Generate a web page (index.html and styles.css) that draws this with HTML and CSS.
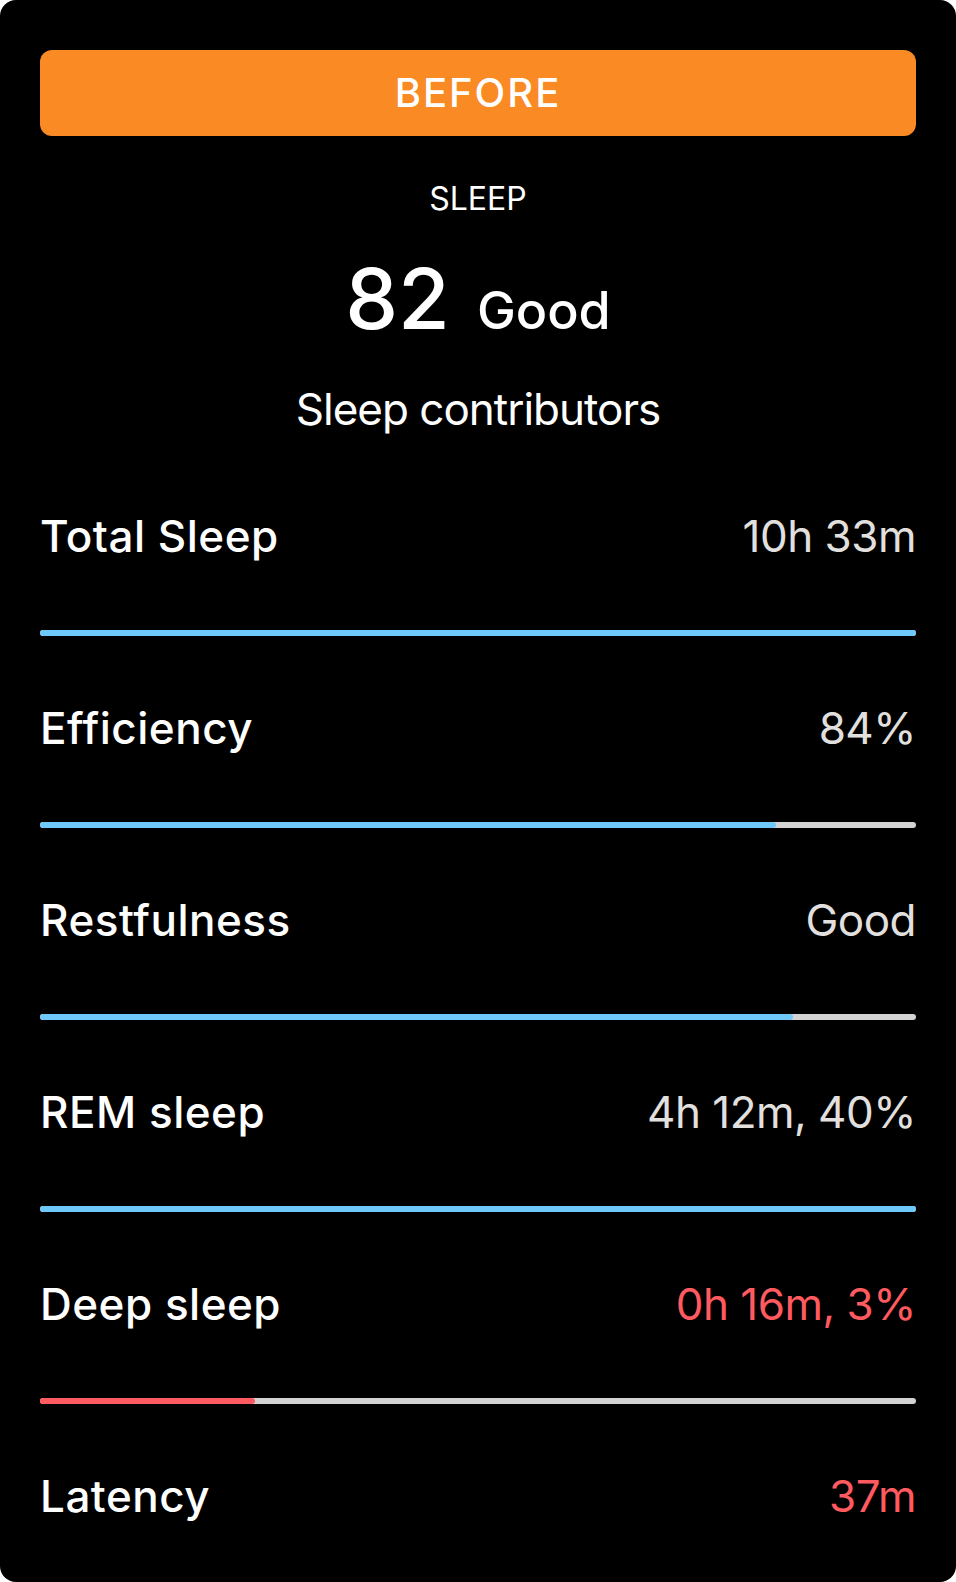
FILE: index.html
```html
<!DOCTYPE html>
<html lang="en">
<head>
  <meta charset="UTF-8">
  <meta name="viewport" content="width=device-width, initial-scale=1.0">
  <title>Sleep - Before</title>
  <link rel="stylesheet" href="styles.css">
</head>
<body>
  <div class="card">
    <div class="badge">BEFORE</div>

    <div class="section-title">SLEEP</div>

    <div class="score">
      <span class="score-num">82</span>
      <span class="score-label">Good</span>
    </div>

    <div class="subtitle">Sleep contributors</div>

    <div class="contributors">
      <div class="row">
        <div class="row-head">
          <span class="name">Total Sleep</span>
          <span class="value">10h 33m</span>
        </div>
        <div class="track"><div class="fill" style="width: 100%"></div></div>
      </div>

      <div class="row">
        <div class="row-head">
          <span class="name">Efficiency</span>
          <span class="value">84%</span>
        </div>
        <div class="track"><div class="fill" style="width: 84%"></div></div>
      </div>

      <div class="row">
        <div class="row-head">
          <span class="name">Restfulness</span>
          <span class="value">Good</span>
        </div>
        <div class="track"><div class="fill" style="width: 86%"></div></div>
      </div>

      <div class="row">
        <div class="row-head">
          <span class="name">REM sleep</span>
          <span class="value">4h 12m, 40%</span>
        </div>
        <div class="track"><div class="fill" style="width: 100%"></div></div>
      </div>

      <div class="row">
        <div class="row-head">
          <span class="name">Deep sleep</span>
          <span class="value warn">0h 16m, 3%</span>
        </div>
        <div class="track"><div class="fill warn" style="width: 24.5%"></div></div>
      </div>

      <div class="row">
        <div class="row-head">
          <span class="name">Latency</span>
          <span class="value warn">37m</span>
        </div>
      </div>
    </div>
  </div>
</body>
</html>
```

FILE: styles.css
```css
body {
  margin: 0;
  background: #fff;
  font-family: Inter, "Open Sans", sans-serif;
  color: #fff;
}
.card {
  height: 1582px;
  box-sizing: border-box;
  padding: 50px 40px 0;
  background: #000;
  border-radius: 16px;
}
.badge {
  height: 86px;
  line-height: 86px;
  background: #f98a24;
  border-radius: 12px;
  text-align: center;
  font-size: 40px;
  font-weight: 500;
  letter-spacing: 2px;
}
.section-title {
  margin-top: 43px;
  line-height: 40px;
  font-size: 32px;
  text-align: center;
}
.score {
  display: flex;
  justify-content: center;
  align-items: baseline;
  gap: 27px;
  margin-top: 38px;
}
.score-num {
  font-size: 84px;
  line-height: 1;
  font-weight: 500;
}
.score-label {
  font-size: 52px;
  line-height: 1;
  font-weight: 500;
}
.subtitle {
  margin-top: 46px;
  font-size: 44px;
  line-height: 44px;
  letter-spacing: -1px;
  text-align: center;
}
.contributors {
  display: flex;
  flex-direction: column;
  gap: 70px;
  margin-top: 83px;
}
.row-head {
  display: flex;
  justify-content: space-between;
  align-items: baseline;
  font-size: 44px;
  line-height: 44px;
}
.name {
  font-weight: 500;
  letter-spacing: 0.5px;
}
.value {
  color: #e2e0df;
  letter-spacing: -0.5px;
}
.value.warn {
  color: #ff5a5f;
}
.track {
  margin-top: 72px;
  height: 6px;
  background: #d3d3d3;
  border-radius: 3px;
}
.fill {
  height: 100%;
  background: #6ec8fa;
  border-radius: 3px;
}
.fill.warn {
  background: #ff5a5f;
}
```
